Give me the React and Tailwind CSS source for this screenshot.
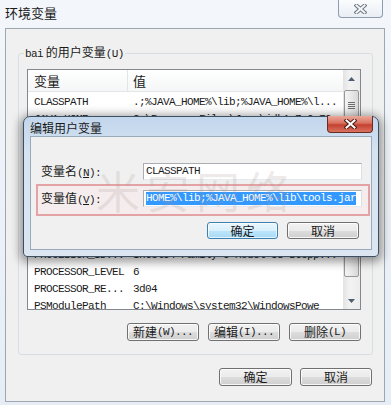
import React from "react";

const mono =
  "font-['Liberation_Mono','Noto_Sans_CJK_SC',monospace] text-[11px] tracking-[-0.6px]";
const cjk = "font-['Noto_Sans_CJK_SC','Liberation_Sans',sans-serif]";

// user variables, one row each (17px high)
const rows = [
  ["CLASSPATH", ".;%JAVA_HOME%\\lib;%JAVA_HOME%\\l..."],
  ["JAVA_HOME", "C:\\Program Files\\Java\\jdk1.7.0_79"],
  ["JRE_HOME", "C:\\Program Files\\Java\\jre7"],
  ["MAVEN_HOME", "D:\\apache-maven-3.3.9"],
  ["NUMBER_OF_PR...", "4"],
  ["OS", "Windows_NT"],
  ["Path", "C:\\Windows\\system32;C:\\Windows;..."],
  ["PATHEXT", ".COM;.EXE;.BAT;.CMD;.VBS;.VBE;..."],
  ["PROCESSOR_AR...", "AMD64"],
  ["PROCESSOR_ID...", "Intel64 Family 6 Model 58 Stepp..."],
  ["PROCESSOR_LEVEL", "6"],
  ["PROCESSOR_RE...", "3d04"],
  ["PSModulePath", "C:\\Windows\\system32\\WindowsPowe"],
];

// Win7 push button
const Btn = ({ w, h = "h-[18px]", primary, children }) => (
  <div
    className={
      primary
        ? `${w} ${h} flex items-center justify-center rounded-[3px] border border-[#3c7fb1] bg-[linear-gradient(#eaf6fd,#d9f0fc_50%,#bee6fd_50%,#a7d9f5)] shadow-[inset_0_0_0_1px_rgba(255,255,255,0.7)] text-[#1a1a1a]`
        : `${w} ${h} flex items-center justify-center rounded-[3px] border border-[#707070] bg-[linear-gradient(#f2f2f2,#ebebeb_50%,#dddddd_50%,#cfcfcf)] shadow-[inset_0_0_0_1px_rgba(255,255,255,0.8)] text-[#1a1a1a]`
    }
  >
    {children}
  </div>
);

const L = ({ children }) => <span className={mono}>{children}</span>;

const Arrow = ({ down }) => (
  <svg width="7" height="4" viewBox="0 0 7 4">
    <path d={down ? "M0 0 L3.5 4 L7 0Z" : "M0 4 L3.5 0 L7 4Z"} fill="#4d5d72" />
  </svg>
);

const CloseX = ({ active }) => (
  <svg width="13" height="10" viewBox="0 0 13 10">
    <path
      d="M2.5 1.5 L10.5 8.5 M10.5 1.5 L2.5 8.5"
      stroke={active ? "#4b1b14" : "#6d7886"}
      strokeWidth="4"
      strokeLinecap="square"
    />
    <path
      d="M2.5 1.5 L10.5 8.5 M10.5 1.5 L2.5 8.5"
      stroke={active ? "#ffffff" : "#f4f6f8"}
      strokeWidth="2"
      strokeLinecap="square"
    />
  </svg>
);

export default function App() {
  return (
    <div
      className={`${cjk} relative w-[391px] h-[405px] overflow-hidden bg-[linear-gradient(180deg,#f3f6fa,#e6edf5)] text-[#1a1a1a]`}
    >
      {/* main window title bar */}
      <div className="flex h-[28px]">
        <div className="pl-[5px] pt-[4px] text-[13px] leading-[18px]">环境变量</div>
        <div className="ml-auto mr-[8px] flex h-[18px] w-[45px] items-center justify-center rounded-b-[4px] border border-t-0 border-[#8f9cad] bg-[linear-gradient(#fbfcfd,#e9eef4)]">
          <CloseX />
        </div>
      </div>

      {/* main window client */}
      <div className="ml-[5px] h-[374px] w-[380px] border border-[#9ea7b1] bg-[#f0f0f0]">
        <fieldset className="ml-[12px] mr-[11px] mt-[16px] min-w-0 rounded-[3px] border border-[#d5dfe5] pb-[13px] pl-[8px] pr-[11px]">
          <legend className="ml-[-3px] px-[1px] text-[12px] leading-[14px]">
            <L>bai</L> 的用户变量<L>(U)</L>
          </legend>

          {/* list view */}
          <div className="mt-[8px] flex h-[241px] border border-[#828790] bg-white">
            <div className="flex-1 overflow-hidden">
              <div className="flex h-[22px] border-b border-[#e5e5e5] bg-[linear-gradient(#ffffff,#f5f6f7)] text-[13px] leading-[21px]">
                <div className="w-[100px] border-r border-[#e5e5e5] pl-[6px]">变量</div>
                <div className="pl-[5px]">值</div>
              </div>
              <div className="pt-[2px]">
                {rows.map(([n, v]) => (
                  <div key={n} className={`${mono} flex h-[17px] items-center whitespace-nowrap`}>
                    <div className="w-[100px] shrink-0 pl-[6px]">{n}</div>
                    <div className="pl-[5px]">{v}</div>
                  </div>
                ))}
              </div>
            </div>
            {/* scrollbar */}
            <div className="flex w-[17px] flex-col bg-[linear-gradient(90deg,#e3e3e3,#f2f2f2_40%,#ececec)]">
              <div className="flex h-[17px] items-center justify-center">
                <Arrow />
              </div>
              <div className="mx-[1px] mt-[3px] flex h-[187px] flex-col items-center rounded-[2px] border border-[#979797] bg-[linear-gradient(90deg,#f4f4f4,#e8e8e8_50%,#d8d8d8)]">
                <div className="mt-[11px] flex flex-col gap-[1px]">
                  <div className="h-[1px] w-[7px] bg-[#6d6d6d]" />
                  <div className="h-[1px] w-[7px] bg-[#6d6d6d]" />
                  <div className="h-[1px] w-[7px] bg-[#6d6d6d]" />
                  <div className="h-[1px] w-[7px] bg-[#6d6d6d]" />
                </div>
              </div>
              <div className="flex-1" />
              <div className="flex h-[17px] items-center justify-center">
                <Arrow down />
              </div>
            </div>
          </div>

          <div className="mt-[13px] flex justify-end gap-[9px] text-[12px]">
            <Btn w="w-[72px]">
              新建<L>(W)...</L>
            </Btn>
            <Btn w="w-[72px]">
              编辑<L>(I)...</L>
            </Btn>
            <Btn w="w-[72px]">
              删除<L>(L)</L>
            </Btn>
          </div>
        </fieldset>

        <div className="mt-[13px] flex justify-end gap-[8px] pr-[12px] text-[12px]">
          <Btn w="w-[73px]">确定</Btn>
          <Btn w="w-[72px]">取消</Btn>
        </div>
      </div>

      {/* edit dialog, floating over the main window */}
      <div className="absolute left-[23px] top-[116px] h-[141px] w-[356px] rounded-t-[7px] rounded-b-[4px] border border-[#3d4f63] bg-[linear-gradient(180deg,#c2d6ec,#d5e3f1_25%,#dbe6f2)] shadow-[0_2px_10px_3px_rgba(0,0,0,0.4)]">
        <div className="flex h-[19px]">
          <div className="pl-[6px] pt-[3px] text-[12px] leading-[16px]">编辑用户变量</div>
          <div className="ml-auto mr-[5px] mt-[-1px] flex h-[17px] w-[46px] items-center justify-center rounded-b-[4px] border border-t-0 border-[#6b2a22] bg-[linear-gradient(#eaa99b,#d9705e_45%,#c4402f_55%,#d8735f)]">
            <CloseX active />
          </div>
        </div>

        <div className="mx-[6px] h-[114px] border border-[#9aaabd] bg-[#f0f0f0] text-[12px]">
          <div className="mt-[26px] flex h-[17px] items-center">
            <div className="w-[112px] pl-[10px]">
              变量名<L>(<span className="underline">N</span>):</L>
            </div>
            <div className={`${mono} flex h-[17px] w-[219px] items-center border border-[#abadb3] border-b-[#e3e9ef] border-r-[#dbdfe6] bg-white pl-[2px]`}>
              CLASSPATH
            </div>
          </div>

          <div className="ml-[5px] mr-[1px] mt-[4px] h-[32px] border-2 border-[#e3a3a5] bg-[#f5eded] pt-[4px]">
            <div className="flex h-[17px] items-center">
              <div className="w-[105px] pl-[3px]">
                变量值<L>(<span className="underline">V</span>):</L>
              </div>
              <div className={`${mono} flex h-[17px] w-[219px] items-center border border-[#abadb3] border-b-[#e3e9ef] border-r-[#dbdfe6] bg-white pl-[2px]`}>
                <span className="bg-[#3399ff] leading-[13px] text-white">
                  HOME%\lib;%JAVA_HOME%\lib\tools.jar
                </span>
              </div>
            </div>
          </div>

          <div className="mt-[6px] flex justify-end gap-[9px] pr-[12px]">
            <Btn w="w-[71px]" h="h-[17px]" primary>
              确定
            </Btn>
            <Btn w="w-[72px]" h="h-[17px]">
              取消
            </Btn>
          </div>
        </div>
      </div>

      {/* faint watermark over the picture */}
      <div className="pointer-events-none absolute left-[96px] top-[164px] text-[44px] leading-[52px] tracking-[6px] text-[#a89090]/20">
        米安网络
      </div>
    </div>
  );
}
